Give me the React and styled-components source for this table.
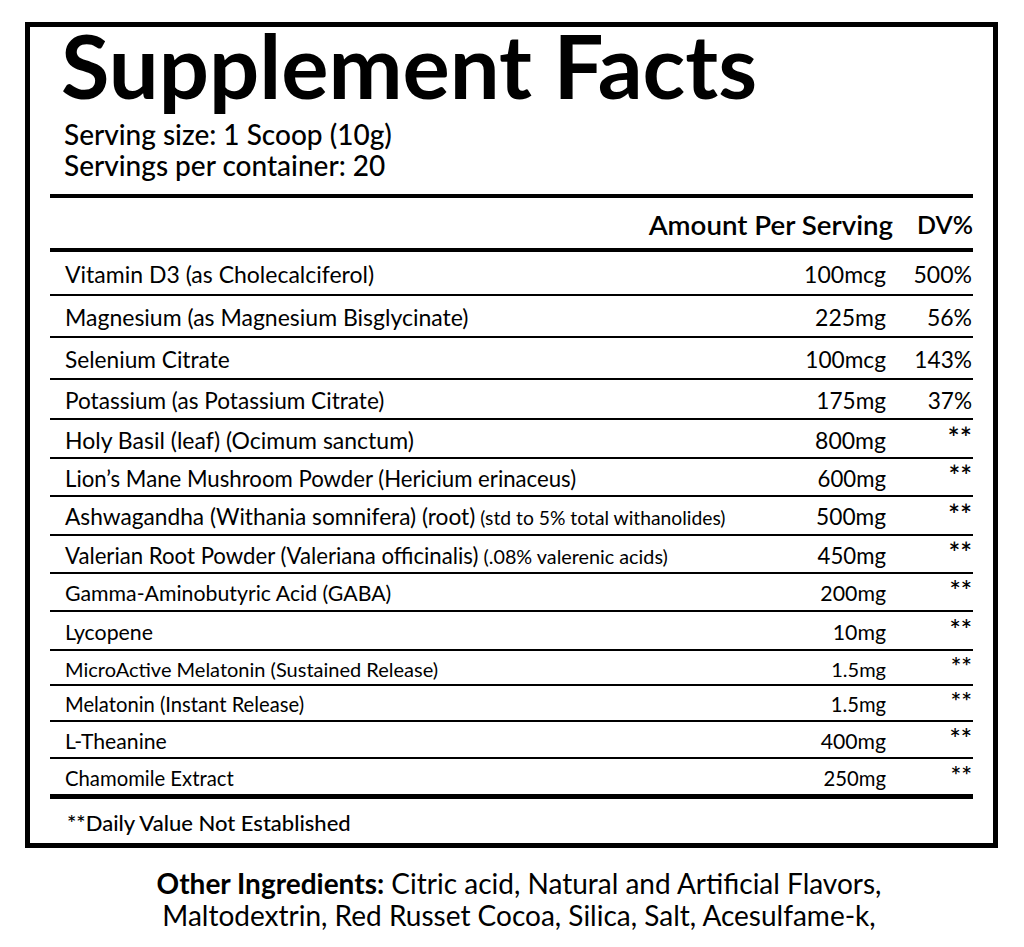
import React from 'react';
import styled, { createGlobalStyle } from 'styled-components';

const GlobalStyle = createGlobalStyle`
  body {
    margin: 0;
    background: #ffffff;
    color: #000;
    font-family: Lato, "Open Sans", sans-serif;
  }
`;

const Page = styled.div`
  padding: 22px 0 0 25px;
  width: 999px;
  box-sizing: border-box;
`;

const Label = styled.section`
  width: 973px;
  box-sizing: border-box;
  border: 5px solid #000;
  padding: 0 20px;
`;

const Title = styled.h1`
  margin: -2px 0 0;
  padding-left: 11px;
  font-size: 88.5px;
  line-height: 80px;
  font-weight: 700;
`;

const Serving = styled.div`
  margin-top: 14px;
  padding-left: 14px;
  font-size: 28px;
  line-height: 31px;
  font-weight: 500;
`;

const Table = styled.div`
  margin-top: 13px;
  border-top: 4px solid #000;
  border-bottom: 5px solid #000;
`;

const HeaderRow = styled.div`
  height: 54px;
  box-sizing: border-box;
  border-bottom: 4px solid #000;
  display: flex;
  justify-content: flex-end;
  align-items: center;
  gap: 24px;
  padding: 2px 0 0;
  font-weight: 600;
`;

const HeaderCell = styled.span`
  font-size: ${(p) => p.$size}px;
`;

const Row = styled.div`
  height: ${(p) => p.$h}px;
  box-sizing: border-box;
  border-bottom: ${(p) => (p.$last ? 'none' : '2px solid #000')};
  display: grid;
  grid-template-columns: 1fr 140px 87px;
  align-items: center;
  padding: 2px 0 0 15px;
  font-size: ${(p) => p.$size}px;
`;

const Name = styled.span`
  white-space: nowrap;
`;

const Note = styled.span`
  font-size: ${(p) => p.$size}px;
`;

const Amount = styled.span`
  text-align: right;
`;

const Dv = styled.span`
  text-align: right;
  padding-right: 1px;
`;

const Stars = styled.span`
  display: inline-block;
  font-size: 1.25em;
  font-weight: 600;
  line-height: 1;
  transform: translateY(-2px);
`;

const Footnote = styled.div`
  height: 42px;
  display: flex;
  align-items: center;
  padding: 2px 0 0 17px;
  font-size: 22px;
  font-weight: 500;
`;

const Other = styled.p`
  margin: 19px 0 0;
  width: 988px;
  text-align: center;
  font-size: 28px;
  line-height: 32px;
  b {
    font-weight: 700;
  }
`;

const rows = [
  { name: 'Vitamin D3 (as Cholecalciferol)', amount: '100mcg', dv: '500%', h: 44, size: 23 },
  { name: 'Magnesium (as Magnesium Bisglycinate)', amount: '225mg', dv: '56%', h: 42, size: 23 },
  { name: 'Selenium Citrate', amount: '100mcg', dv: '143%', h: 42, size: 22.7 },
  { name: 'Potassium (as Potassium Citrate)', amount: '175mg', dv: '37%', h: 40, size: 22.6 },
  { name: 'Holy Basil (leaf) (Ocimum sanctum)', amount: '800mg', h: 39, size: 23 },
  { name: 'Lion’s Mane Mushroom Powder (Hericium erinaceus)', amount: '600mg', h: 38, size: 22.2 },
  { name: 'Ashwagandha (Withania somnifera) (root)', note: '(std to 5% total withanolides)', noteSize: 19.3, amount: '500mg', h: 39, size: 22.7 },
  { name: 'Valerian Root Powder (Valeriana officinalis)', note: '(.08% valerenic acids)', noteSize: 19.8, amount: '450mg', h: 38, size: 22.2 },
  { name: 'Gamma-Aminobutyric Acid (GABA)', amount: '200mg', h: 38, size: 21.3 },
  { name: 'Lycopene', amount: '10mg', h: 39, size: 21.3 },
  { name: 'MicroActive Melatonin (Sustained Release)', amount: '1.5mg', h: 35, size: 20 },
  { name: 'Melatonin (Instant Release)', amount: '1.5mg', h: 36, size: 20.2 },
  { name: 'L-Theanine', amount: '400mg', h: 37, size: 21.2 },
  { name: 'Chamomile Extract', amount: '250mg', h: 35, size: 20.3 },
];

export default function App() {
  return (
    <Page>
      <GlobalStyle />
      <Label>
        <Title>Supplement Facts</Title>
        <Serving>
          Serving size: 1 Scoop (10g)
          <br />
          Servings per container: 20
        </Serving>
        <Table>
          <HeaderRow>
            <HeaderCell $size={27.7}>Amount Per Serving</HeaderCell>
            <HeaderCell $size={25}>DV%</HeaderCell>
          </HeaderRow>
          {rows.map((r, i) => (
            <Row key={r.name} $h={r.h} $size={r.size} $last={i === rows.length - 1}>
              <Name>
                {r.name}
                {r.note && <Note $size={r.noteSize}> {r.note}</Note>}
              </Name>
              <Amount>{r.amount}</Amount>
              <Dv>{r.dv || <Stars>**</Stars>}</Dv>
            </Row>
          ))}
        </Table>
        <Footnote>**Daily Value Not Established</Footnote>
      </Label>
      <Other>
        <b>Other Ingredients:</b> Citric acid, Natural and Artificial Flavors,
        <br />
        Maltodextrin, Red Russet Cocoa, Silica, Salt, Acesulfame-k,
      </Other>
    </Page>
  );
}
